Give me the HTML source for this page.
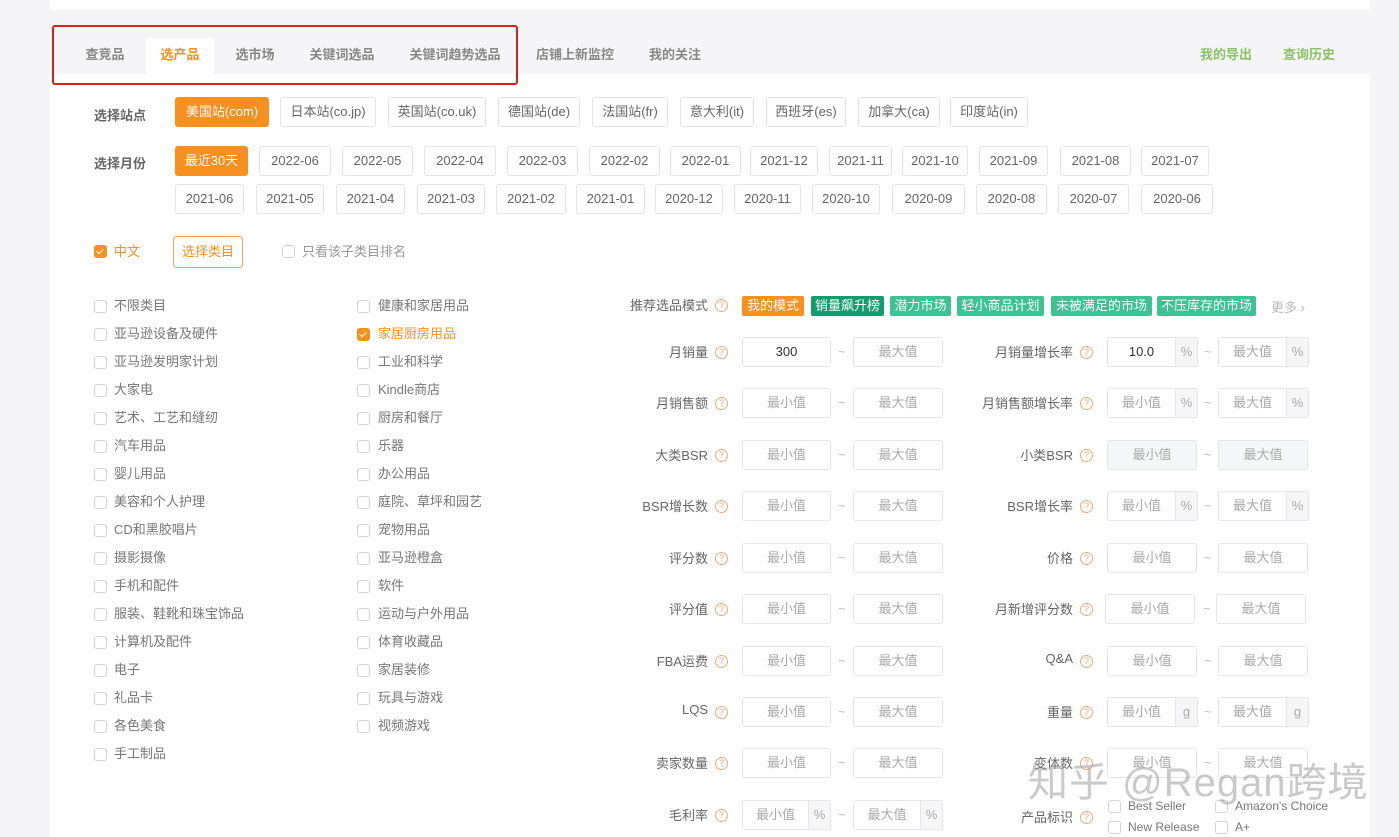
<!DOCTYPE html>
<html><head><meta charset="utf-8"><style>
*{margin:0;padding:0;box-sizing:border-box}
body{width:1399px;height:837px;overflow:hidden;background:#f5f5f7;font-family:"Liberation Sans","Noto Sans CJK SC",sans-serif;font-size:13px;color:#666;position:relative}
.a{position:absolute;white-space:nowrap}
.panel{position:absolute;left:50px;top:74px;width:1320px;height:763px;background:#fff}
.top{position:absolute;left:50px;top:0;width:1320px;height:10px;background:#fff}
.tab{position:absolute;top:38px;height:36px;line-height:34px;font-size:13px;color:#888;font-weight:bold;text-align:center}
.b{position:absolute;height:30px;line-height:28px;border:1px solid #e4e4e4;border-radius:3px;text-align:center;font-size:13px;color:#666;background:#fff}
.on{background:#f7901e;border-color:#f7901e;color:#fff}
.lbl{font-weight:bold;color:#666;font-size:13px;margin-top:-2px}
.cb{position:absolute;width:13px;height:13px;border:1px solid #d4d4d4;border-radius:3px;background:#fff}
.cb.k{background:#f7901e;border-color:#f7901e}
.cb.k:after{content:"";position:absolute;left:3px;top:1px;width:3px;height:6px;border:solid #fff;border-width:0 1.5px 1.5px 0;transform:rotate(45deg)}
.ct{position:absolute;font-size:13px;color:#777;margin-top:-2px;white-space:nowrap}
.in{position:absolute;height:30px;line-height:28px;border:1px solid #e6e6e6;border-radius:3px;text-align:center;color:#aaa;font-size:13px;background:#fff}
.sf{position:absolute;height:30px;line-height:28px;width:22px;border:1px solid #e6e6e6;border-left:none;background:#f6f6f8;text-align:center;color:#aaa;border-radius:0 3px 3px 0}
.q{position:absolute;width:13px;height:13px;border:1px solid #f0a878;border-radius:50%;font-size:9px;line-height:11px;text-align:center;color:#f0a878}
.rl{position:absolute;text-align:right;color:#666;font-size:13px;margin-top:-2px}
.t{position:absolute;top:296px;height:20px;line-height:20px;color:#fff;font-size:13px;text-align:center;border-radius:2px}
</style></head><body>
<div class="top"></div>
<div class="panel"></div>
<div class="tab" style="left:72px;width:66px">查竞品</div>
<div class="tab" style="left:146px;width:68px;background:#fff;color:#f7901e">选产品</div>
<div class="tab" style="left:222px;width:66px">选市场</div>
<div class="tab" style="left:300px;width:84px">关键词选品</div>
<div class="tab" style="left:400px;width:110px">关键词趋势选品</div>
<div class="tab" style="left:525px;width:100px">店铺上新监控</div>
<div class="tab" style="left:640px;width:70px">我的关注</div>
<div class="tab" style="left:1190px;width:72px;color:#8cc266">我的导出</div>
<div class="tab" style="left:1273px;width:72px;color:#8cc266">查询历史</div>
<div class="a" style="left:52px;top:25px;width:466px;height:60px;border:2px solid #d8221c;border-radius:3px"></div>

<div class="a lbl" style="left:94px;top:107px">选择站点</div>
<div class="b on" style="left:175px;top:97px;width:94px">美国站(com)</div>
<div class="b" style="left:280px;top:97px;width:96px">日本站(co.jp)</div>
<div class="b" style="left:388px;top:97px;width:98px">英国站(co.uk)</div>
<div class="b" style="left:498px;top:97px;width:82px">德国站(de)</div>
<div class="b" style="left:592px;top:97px;width:76px">法国站(fr)</div>
<div class="b" style="left:680px;top:97px;width:74px">意大利(it)</div>
<div class="b" style="left:766px;top:97px;width:80px">西班牙(es)</div>
<div class="b" style="left:858px;top:97px;width:82px">加拿大(ca)</div>
<div class="b" style="left:950px;top:97px;width:78px">印度站(in)</div>

<div class="a lbl" style="left:94px;top:155px">选择月份</div>
<div class="b on" style="left:175px;top:146px;width:73px">最近30天</div>
<div class="b" style="left:259px;top:146px;width:72px">2022-06</div>
<div class="b" style="left:342px;top:146px;width:71px">2022-05</div>
<div class="b" style="left:424px;top:146px;width:72px">2022-04</div>
<div class="b" style="left:507px;top:146px;width:71px">2022-03</div>
<div class="b" style="left:589px;top:146px;width:71px">2022-02</div>
<div class="b" style="left:670px;top:146px;width:71px">2022-01</div>
<div class="b" style="left:750px;top:146px;width:68px">2021-12</div>
<div class="b" style="left:829px;top:146px;width:63px">2021-11</div>
<div class="b" style="left:902px;top:146px;width:66px">2021-10</div>
<div class="b" style="left:979px;top:146px;width:69px">2021-09</div>
<div class="b" style="left:1060px;top:146px;width:71px">2021-08</div>
<div class="b" style="left:1141px;top:146px;width:68px">2021-07</div>
<div class="b" style="left:175px;top:184px;width:69px">2021-06</div>
<div class="b" style="left:256px;top:184px;width:68px">2021-05</div>
<div class="b" style="left:336px;top:184px;width:69px">2021-04</div>
<div class="b" style="left:417px;top:184px;width:68px">2021-03</div>
<div class="b" style="left:496px;top:184px;width:70px">2021-02</div>
<div class="b" style="left:576px;top:184px;width:69px">2021-01</div>
<div class="b" style="left:655px;top:184px;width:68px">2020-12</div>
<div class="b" style="left:734px;top:184px;width:67px">2020-11</div>
<div class="b" style="left:812px;top:184px;width:68px">2020-10</div>
<div class="b" style="left:892px;top:184px;width:73px">2020-09</div>
<div class="b" style="left:976px;top:184px;width:71px">2020-08</div>
<div class="b" style="left:1058px;top:184px;width:71px">2020-07</div>
<div class="b" style="left:1141px;top:184px;width:72px">2020-06</div>

<div class="cb k" style="left:94px;top:245px"></div>
<div class="ct" style="left:114px;top:243px;color:#f7901e">中文</div>
<div class="b" style="left:173px;top:236px;width:70px;height:32px;line-height:30px;border-color:#f0a060;color:#f7901e">选择类目</div>
<div class="cb" style="left:282px;top:245px"></div>
<div class="ct" style="left:302px;top:243px;color:#999">只看该子类目排名</div>

<div class="cb" style="left:94px;top:300px"></div><div class="ct" style="left:114px;top:297px">不限类目</div>
<div class="cb" style="left:94px;top:328px"></div><div class="ct" style="left:114px;top:325px">亚马逊设备及硬件</div>
<div class="cb" style="left:94px;top:356px"></div><div class="ct" style="left:114px;top:353px">亚马逊发明家计划</div>
<div class="cb" style="left:94px;top:384px"></div><div class="ct" style="left:114px;top:381px">大家电</div>
<div class="cb" style="left:94px;top:412px"></div><div class="ct" style="left:114px;top:409px">艺术、工艺和缝纫</div>
<div class="cb" style="left:94px;top:440px"></div><div class="ct" style="left:114px;top:437px">汽车用品</div>
<div class="cb" style="left:94px;top:468px"></div><div class="ct" style="left:114px;top:465px">婴儿用品</div>
<div class="cb" style="left:94px;top:496px"></div><div class="ct" style="left:114px;top:493px">美容和个人护理</div>
<div class="cb" style="left:94px;top:524px"></div><div class="ct" style="left:114px;top:521px">CD和黑胶唱片</div>
<div class="cb" style="left:94px;top:552px"></div><div class="ct" style="left:114px;top:549px">摄影摄像</div>
<div class="cb" style="left:94px;top:580px"></div><div class="ct" style="left:114px;top:577px">手机和配件</div>
<div class="cb" style="left:94px;top:608px"></div><div class="ct" style="left:114px;top:605px">服装、鞋靴和珠宝饰品</div>
<div class="cb" style="left:94px;top:636px"></div><div class="ct" style="left:114px;top:633px">计算机及配件</div>
<div class="cb" style="left:94px;top:664px"></div><div class="ct" style="left:114px;top:661px">电子</div>
<div class="cb" style="left:94px;top:692px"></div><div class="ct" style="left:114px;top:689px">礼品卡</div>
<div class="cb" style="left:94px;top:720px"></div><div class="ct" style="left:114px;top:717px">各色美食</div>
<div class="cb" style="left:94px;top:748px"></div><div class="ct" style="left:114px;top:745px">手工制品</div>

<div class="cb" style="left:357px;top:300px"></div><div class="ct" style="left:378px;top:297px">健康和家居用品</div>
<div class="cb k" style="left:357px;top:328px"></div><div class="ct" style="left:378px;top:325px;color:#f7901e">家居厨房用品</div>
<div class="cb" style="left:357px;top:356px"></div><div class="ct" style="left:378px;top:353px">工业和科学</div>
<div class="cb" style="left:357px;top:384px"></div><div class="ct" style="left:378px;top:381px">Kindle商店</div>
<div class="cb" style="left:357px;top:412px"></div><div class="ct" style="left:378px;top:409px">厨房和餐厅</div>
<div class="cb" style="left:357px;top:440px"></div><div class="ct" style="left:378px;top:437px">乐器</div>
<div class="cb" style="left:357px;top:468px"></div><div class="ct" style="left:378px;top:465px">办公用品</div>
<div class="cb" style="left:357px;top:496px"></div><div class="ct" style="left:378px;top:493px">庭院、草坪和园艺</div>
<div class="cb" style="left:357px;top:524px"></div><div class="ct" style="left:378px;top:521px">宠物用品</div>
<div class="cb" style="left:357px;top:552px"></div><div class="ct" style="left:378px;top:549px">亚马逊橙盒</div>
<div class="cb" style="left:357px;top:580px"></div><div class="ct" style="left:378px;top:577px">软件</div>
<div class="cb" style="left:357px;top:608px"></div><div class="ct" style="left:378px;top:605px">运动与户外用品</div>
<div class="cb" style="left:357px;top:636px"></div><div class="ct" style="left:378px;top:633px">体育收藏品</div>
<div class="cb" style="left:357px;top:664px"></div><div class="ct" style="left:378px;top:661px">家居装修</div>
<div class="cb" style="left:357px;top:692px"></div><div class="ct" style="left:378px;top:689px">玩具与游戏</div>
<div class="cb" style="left:357px;top:720px"></div><div class="ct" style="left:378px;top:717px">视频游戏</div>

<div class="rl" style="left:600px;width:108px;top:297px">推荐选品模式</div><div class="q" style="left:715px;top:299px">?</div>
<div class="t" style="left:742px;width:62px;background:#f7901e">我的模式</div>
<div class="t" style="left:811px;width:73px;background:#139c6c">销量飙升榜</div>
<div class="t" style="left:890px;width:61px;background:#3cc391">潜力市场</div>
<div class="t" style="left:957px;width:87px;background:#3cc391">轻小商品计划</div>
<div class="t" style="left:1051px;width:101px;background:#3cc391">未被满足的市场</div>
<div class="t" style="left:1157px;width:99px;background:#3cc391">不压库存的市场</div>
<div class="a" style="left:1271px;top:297px;color:#bbb">更多 ›</div>

<div class="rl" style="left:600px;width:108px;top:344px">月销量</div><div class="q" style="left:715px;top:346px">?</div>
<div class="in" style="left:742px;top:337px;width:89px;color:#333">300</div><div class="a" style="left:838px;top:344px;color:#bbb">~</div><div class="in" style="left:853px;top:337px;width:90px">最大值</div>
<div class="rl" style="left:960px;width:113px;top:344px">月销量增长率</div><div class="q" style="left:1080px;top:346px">?</div>
<div class="in" style="left:1107px;top:337px;width:69px;border-radius:3px 0 0 3px;color:#333">10.0</div><div class="sf" style="left:1176px;top:337px">%</div><div class="a" style="left:1204px;top:344px;color:#bbb">~</div><div class="in" style="left:1218px;top:337px;width:69px;border-radius:3px 0 0 3px">最大值</div><div class="sf" style="left:1287px;top:337px">%</div>

<div class="rl" style="left:600px;width:108px;top:395px">月销售额</div><div class="q" style="left:715px;top:397px">?</div>
<div class="in" style="left:742px;top:388px;width:89px">最小值</div><div class="a" style="left:838px;top:395px;color:#bbb">~</div><div class="in" style="left:853px;top:388px;width:90px">最大值</div>
<div class="rl" style="left:960px;width:113px;top:395px">月销售额增长率</div><div class="q" style="left:1080px;top:397px">?</div>
<div class="in" style="left:1107px;top:388px;width:69px;border-radius:3px 0 0 3px">最小值</div><div class="sf" style="left:1176px;top:388px">%</div><div class="a" style="left:1204px;top:395px;color:#bbb">~</div><div class="in" style="left:1218px;top:388px;width:69px;border-radius:3px 0 0 3px">最大值</div><div class="sf" style="left:1287px;top:388px">%</div>

<div class="rl" style="left:600px;width:108px;top:447px">大类BSR</div><div class="q" style="left:715px;top:449px">?</div>
<div class="in" style="left:742px;top:440px;width:89px">最小值</div><div class="a" style="left:838px;top:447px;color:#bbb">~</div><div class="in" style="left:853px;top:440px;width:90px">最大值</div>
<div class="rl" style="left:960px;width:113px;top:447px">小类BSR</div><div class="q" style="left:1080px;top:449px">?</div>
<div class="in" style="left:1107px;top:440px;width:90px;background:#f5f6f8">最小值</div><div class="a" style="left:1204px;top:447px;color:#bbb">~</div><div class="in" style="left:1218px;top:440px;width:90px;background:#f5f6f8">最大值</div>

<div class="rl" style="left:600px;width:108px;top:498px">BSR增长数</div><div class="q" style="left:715px;top:500px">?</div>
<div class="in" style="left:742px;top:491px;width:89px">最小值</div><div class="a" style="left:838px;top:498px;color:#bbb">~</div><div class="in" style="left:853px;top:491px;width:90px">最大值</div>
<div class="rl" style="left:960px;width:113px;top:498px">BSR增长率</div><div class="q" style="left:1080px;top:500px">?</div>
<div class="in" style="left:1107px;top:491px;width:69px;border-radius:3px 0 0 3px">最小值</div><div class="sf" style="left:1176px;top:491px">%</div><div class="a" style="left:1204px;top:498px;color:#bbb">~</div><div class="in" style="left:1218px;top:491px;width:69px;border-radius:3px 0 0 3px">最大值</div><div class="sf" style="left:1287px;top:491px">%</div>

<div class="rl" style="left:600px;width:108px;top:550px">评分数</div><div class="q" style="left:715px;top:552px">?</div>
<div class="in" style="left:742px;top:543px;width:89px">最小值</div><div class="a" style="left:838px;top:550px;color:#bbb">~</div><div class="in" style="left:853px;top:543px;width:90px">最大值</div>
<div class="rl" style="left:960px;width:113px;top:550px">价格</div><div class="q" style="left:1080px;top:552px">?</div>
<div class="in" style="left:1107px;top:543px;width:90px">最小值</div><div class="a" style="left:1204px;top:550px;color:#bbb">~</div><div class="in" style="left:1218px;top:543px;width:90px">最大值</div>

<div class="rl" style="left:600px;width:108px;top:601px">评分值</div><div class="q" style="left:715px;top:603px">?</div>
<div class="in" style="left:742px;top:594px;width:89px">最小值</div><div class="a" style="left:838px;top:601px;color:#bbb">~</div><div class="in" style="left:853px;top:594px;width:90px">最大值</div>
<div class="rl" style="left:960px;width:113px;top:601px">月新增评分数</div><div class="q" style="left:1080px;top:603px">?</div>
<div class="in" style="left:1105px;top:594px;width:90px">最小值</div><div class="a" style="left:1203px;top:601px;color:#bbb">~</div><div class="in" style="left:1216px;top:594px;width:90px">最大值</div>

<div class="rl" style="left:600px;width:108px;top:653px">FBA运费</div><div class="q" style="left:715px;top:655px">?</div>
<div class="in" style="left:742px;top:646px;width:89px">最小值</div><div class="a" style="left:838px;top:653px;color:#bbb">~</div><div class="in" style="left:853px;top:646px;width:90px">最大值</div>
<div class="rl" style="left:960px;width:113px;top:653px">Q&amp;A</div><div class="q" style="left:1080px;top:655px">?</div>
<div class="in" style="left:1107px;top:646px;width:90px">最小值</div><div class="a" style="left:1204px;top:653px;color:#bbb">~</div><div class="in" style="left:1218px;top:646px;width:90px">最大值</div>

<div class="rl" style="left:600px;width:108px;top:704px">LQS</div><div class="q" style="left:715px;top:706px">?</div>
<div class="in" style="left:742px;top:697px;width:89px">最小值</div><div class="a" style="left:838px;top:704px;color:#bbb">~</div><div class="in" style="left:853px;top:697px;width:90px">最大值</div>
<div class="rl" style="left:960px;width:113px;top:704px">重量</div><div class="q" style="left:1080px;top:706px">?</div>
<div class="in" style="left:1107px;top:697px;width:69px;border-radius:3px 0 0 3px">最小值</div><div class="sf" style="left:1176px;top:697px">g</div><div class="a" style="left:1204px;top:704px;color:#bbb">~</div><div class="in" style="left:1218px;top:697px;width:69px;border-radius:3px 0 0 3px">最大值</div><div class="sf" style="left:1287px;top:697px">g</div>

<div class="rl" style="left:600px;width:108px;top:755px">卖家数量</div><div class="q" style="left:715px;top:757px">?</div>
<div class="in" style="left:742px;top:748px;width:89px">最小值</div><div class="a" style="left:838px;top:755px;color:#bbb">~</div><div class="in" style="left:853px;top:748px;width:90px">最大值</div>
<div class="rl" style="left:960px;width:113px;top:755px">变体数</div><div class="q" style="left:1080px;top:757px">?</div>
<div class="in" style="left:1107px;top:748px;width:90px">最小值</div><div class="a" style="left:1204px;top:755px;color:#bbb">~</div><div class="in" style="left:1218px;top:748px;width:90px">最大值</div>

<div class="rl" style="left:600px;width:108px;top:807px">毛利率</div><div class="q" style="left:715px;top:809px">?</div>
<div class="in" style="left:742px;top:800px;width:67px;border-radius:3px 0 0 3px">最小值</div><div class="sf" style="left:809px;top:800px">%</div><div class="a" style="left:838px;top:807px;color:#bbb">~</div><div class="in" style="left:853px;top:800px;width:68px;border-radius:3px 0 0 3px">最大值</div><div class="sf" style="left:921px;top:800px">%</div>
<div class="rl" style="left:960px;width:113px;top:809px">产品标识</div><div class="q" style="left:1080px;top:811px">?</div>
<div class="cb" style="left:1108px;top:800px"></div><div class="ct" style="left:1128px;top:801px;font-size:12px">Best Seller</div>
<div class="cb" style="left:1215px;top:800px"></div><div class="ct" style="left:1235px;top:801px;font-size:12px">Amazon's Choice</div>
<div class="cb" style="left:1108px;top:821px"></div><div class="ct" style="left:1128px;top:822px;font-size:12px">New Release</div>
<div class="cb" style="left:1215px;top:821px"></div><div class="ct" style="left:1235px;top:822px;font-size:12px">A+</div>

<div class="a" style="left:1028px;top:750px;font-size:40px;color:rgba(150,150,150,0.5);letter-spacing:1px">知乎 @Regan跨境</div>
</body></html>
